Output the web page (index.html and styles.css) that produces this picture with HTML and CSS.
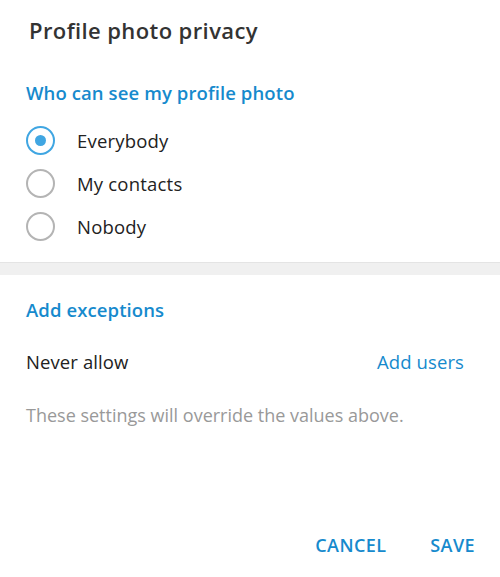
FILE: index.html
```html
<!DOCTYPE html>
<html lang="en">
<head>
  <meta charset="UTF-8">
  <meta name="viewport" content="width=device-width, initial-scale=1.0">
  <title>Profile photo privacy</title>
  <link rel="stylesheet" href="styles.css">
</head>
<body>
  <div class="box">
    <h1 class="title">Profile photo privacy</h1>

    <div class="section">
      <div class="section-title">Who can see my profile photo</div>
      <label class="radio checked"><span class="dot"></span>Everybody</label>
      <label class="radio"><span class="dot"></span>My contacts</label>
      <label class="radio"><span class="dot"></span>Nobody</label>
    </div>

    <div class="divider"></div>

    <div class="section exceptions">
      <div class="section-title">Add exceptions</div>
      <div class="row">
        <span>Never allow</span>
        <a class="link">Add users</a>
      </div>
      <div class="note">These settings will override the values above.</div>
    </div>

    <div class="buttons">
      <button>CANCEL</button>
      <button>SAVE</button>
    </div>
  </div>
</body>
</html>
```

FILE: styles.css
```css
body {
  margin: 0;
  font-family: "Open Sans", Arial, sans-serif;
  background: #fff;
  color: #222;
}
.box {
  width: 500px;
  height: 577px;
  display: flex;
  flex-direction: column;
}
.title {
  margin: 0;
  height: 61px;
  line-height: 61px;
  padding-left: 29px;
  font-size: 22px;
  font-weight: 600;
  letter-spacing: 0.4px;
  color: #333;
}
.section {
  padding: 0 26px;
}
.section-title {
  margin-top: 12px;
  height: 40px;
  line-height: 40px;
  font-size: 18.5px;
  font-weight: 600;
  letter-spacing: 0.1px;
  color: #168acd;
}
.radio {
  display: flex;
  align-items: center;
  height: 43px;
  font-size: 18.5px;
  letter-spacing: 0.2px;
}
.radio:first-of-type {
  margin-top: 6px;
}
.dot {
  width: 25px;
  height: 25px;
  border: 2px solid #b4b4b4;
  border-radius: 50%;
  margin-right: 22px;
  display: flex;
  align-items: center;
  justify-content: center;
  flex-shrink: 0;
}
.radio.checked .dot {
  border-color: #40a6e2;
}
.radio.checked .dot::after {
  content: "";
  width: 11px;
  height: 11px;
  border-radius: 50%;
  background: #40a6e2;
}
.divider {
  margin-top: 14px;
  height: 12px;
  background: #f0f0f0;
  border-top: 1px solid #e4e4e4;
}
.exceptions .section-title {
  margin-top: 15px;
}
.row {
  display: flex;
  justify-content: space-between;
  align-items: center;
  height: 43px;
  margin-top: 10px;
  font-size: 18.5px;
  letter-spacing: 0.1px;
  padding-right: 10px;
}
.link {
  color: #168acd;
}
.note {
  margin-top: 12px;
  height: 40px;
  line-height: 40px;
  font-size: 18px;
  color: #999;
}
.buttons {
  margin-top: auto;
  display: flex;
  justify-content: flex-end;
  gap: 44px;
  padding: 0 25px 12px 0;
}
button {
  border: none;
  background: none;
  padding: 0;
  height: 40px;
  font-family: inherit;
  font-size: 18px;
  font-weight: 600;
  letter-spacing: 0.4px;
  color: #168acd;
  cursor: pointer;
}
```
